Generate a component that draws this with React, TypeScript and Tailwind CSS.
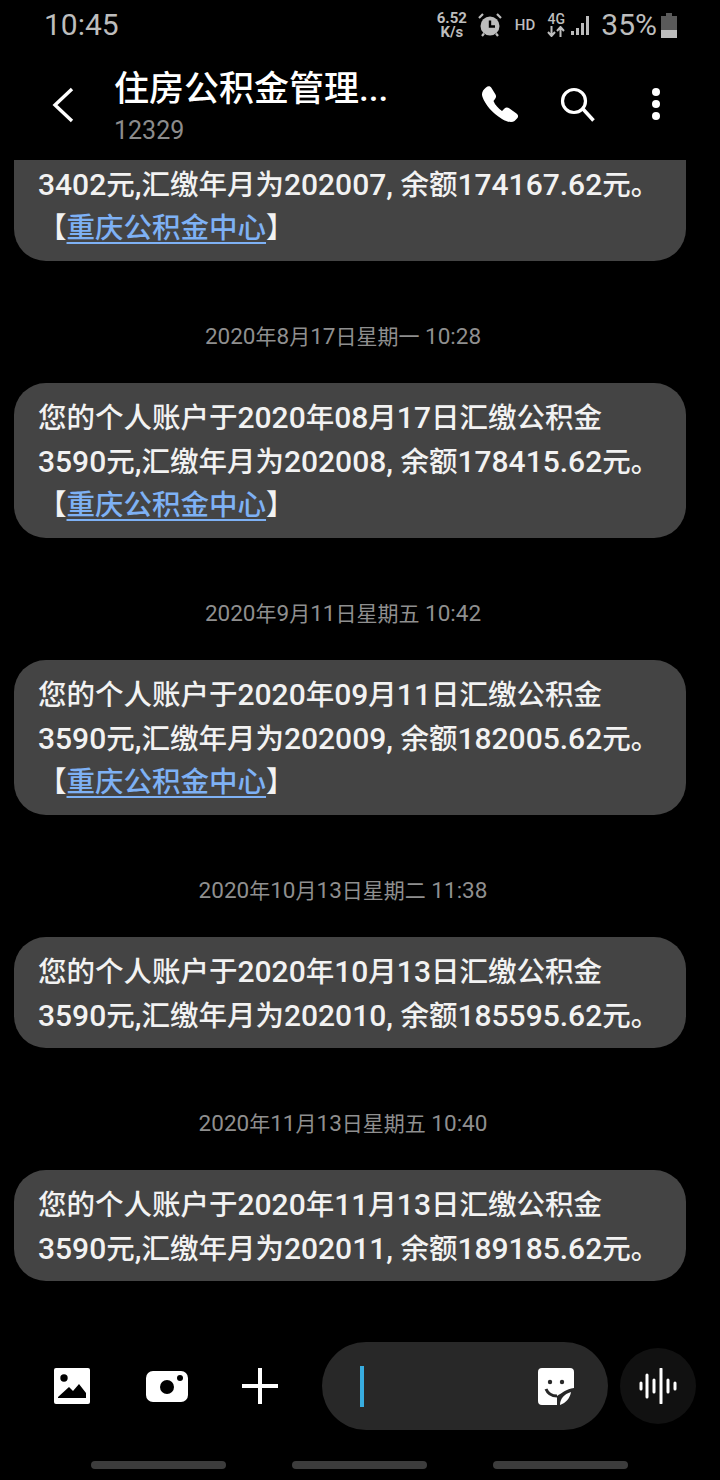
const FONT = "font-['Roboto','Noto_Sans_CJK_SC',sans-serif]";

interface Message {
  date: string;
  first?: string;
  second: string;
  link?: boolean;
}

const messages: Message[] = [
  { date: "", second: "3402元,汇缴年月为202007, 余额174167.62元。", link: true },
  { date: "2020年8月17日星期一 10:28", first: "您的个人账户于2020年08月17日汇缴公积金", second: "3590元,汇缴年月为202008, 余额178415.62元。", link: true },
  { date: "2020年9月11日星期五 10:42", first: "您的个人账户于2020年09月11日汇缴公积金", second: "3590元,汇缴年月为202009, 余额182005.62元。", link: true },
  { date: "2020年10月13日星期二 11:38", first: "您的个人账户于2020年10月13日汇缴公积金", second: "3590元,汇缴年月为202010, 余额185595.62元。" },
  { date: "2020年11月13日星期五 10:40", first: "您的个人账户于2020年11月13日汇缴公积金", second: "3590元,汇缴年月为202011, 余额189185.62元。" },
];

// latin runs are set a bit larger than the CJK around them, like the phone's font
function Mixed({ text, latin }: { text: string; latin: string }) {
  return (
    <>
      {text.split(/([\x00-\x7f]+)/).map((part, i) =>
        i % 2 ? (
          <span key={i} className={latin}>
            {part}
          </span>
        ) : (
          part
        )
      )}
    </>
  );
}

function StatusBar() {
  return (
    <div className="flex h-[50px] shrink-0 items-center pl-[44px] pr-[42px] text-[#bdbdbd]">
      <span className="text-[30px] leading-none">10:45</span>
      <div className="ml-auto flex items-center">
        <div className="w-[32px] text-center text-[15px] font-bold leading-[14px]">
          6.52
          <br />
          K/s
        </div>
        <svg className="ml-[9px]" width="26" height="26" viewBox="0 0 26 26">
          <circle cx="13" cy="14" r="9.5" fill="#bdbdbd" />
          <path d="M13 8.5v6h5" fill="none" stroke="#000" strokeWidth="2.4" />
          <path d="M2 6l4-4M24 6l-4-4M5 24l2-2.5M21 24l-2-2.5" stroke="#bdbdbd" strokeWidth="2.2" />
        </svg>
        <span className="ml-[12px] text-[15px] font-medium">HD</span>
        <div className="ml-[12px] flex w-[18px] flex-col items-center">
          <span className="text-[14px] font-medium leading-[13px]">4G</span>
          <svg width="18" height="11" viewBox="0 0 18 11">
            <path d="M4.5 0v9M1 6l3.5 4L8 6M13.5 11V2M10 5l3.5-4L17 5" fill="none" stroke="#bdbdbd" strokeWidth="2" />
          </svg>
        </div>
        <svg className="ml-[5px]" width="22" height="22" viewBox="0 0 22 22">
          <path d="M1 17h3v4H1zM6 14h3v7H6zM11 9h3v12h-3zM16 2h3v19h-3z" fill="#bdbdbd" />
        </svg>
        <span className="ml-[9px] text-[30px] leading-none">35%</span>
        <svg className="ml-[3px]" width="18" height="25" viewBox="0 0 18 25">
          <path d="M6 0h6v3h5v14H1V3h5z" fill="#5a5a5a" />
          <path d="M1 17h16v8H1z" fill="#bdbdbd" />
        </svg>
      </div>
    </div>
  );
}

function Header() {
  return (
    <div className="flex h-[110px] shrink-0 items-start">
      <svg className="ml-[50px] mt-[36px]" width="28" height="38" viewBox="0 0 28 38">
        <path d="M22 3L5 19l17 16" fill="none" stroke="#fff" strokeWidth="3.4" />
      </svg>
      <div className="ml-[36px] w-[340px]">
        <div className="mt-[18px] text-[35px] font-medium leading-[44px] text-white">住房公积金管理...</div>
        <div className="mt-[4px] text-[25px] leading-[30px] text-[#8c8c8c]">12329</div>
      </div>
      <svg className="ml-[28px] mt-[36px] overflow-visible" width="36" height="36" viewBox="0 0 36 36">
        <path
          d="M4 1.500C6-.5 8.500 0 9.500 2l4 6.500c1 2 .5 3.500-.5 4.500l-1.500 2c1.500 4 5 7.500 8.500 10l2.500-2.500c1.500-1.500 3.500-1 5 0l7 5c2 1.500 2 3.500.5 5L32.500 35c-2.500 2-7.500 1-12.500-2C10 27 3 18 .5 11-1 7 1 4 4 1.500z"
          fill="#fff"
        />
      </svg>
      <svg className="ml-[42px] mt-[36px]" width="38" height="38" viewBox="0 0 38 38">
        <circle cx="14" cy="15" r="11.500" fill="none" stroke="#fff" strokeWidth="3.200" />
        <path d="M23 23l10.500 11.500" stroke="#fff" strokeWidth="3.500" />
      </svg>
      <div className="ml-[54px] mt-[38px] flex flex-col gap-[4px]">
        <span className="h-[8px] w-[8px] rounded-full bg-white" />
        <span className="h-[8px] w-[8px] rounded-full bg-white" />
        <span className="h-[8px] w-[8px] rounded-full bg-white" />
      </div>
    </div>
  );
}

function Bubble({ first, second, link }: Message) {
  const latin = "text-[30px]";
  return (
    <div className="ml-[14px] rounded-[32px] bg-[#444444] pb-[10px] pl-[24px] pt-[13px] text-[28.5px] font-medium leading-[44px] whitespace-nowrap text-[#f2f2f2]">
      {/* the top bubble's first line is scrolled away under the header */}
      <div className="h-[44px]">{first && <Mixed text={first} latin={latin} />}</div>
      <div className="h-[44px]">
        <Mixed text={second} latin={latin} />
      </div>
      {link && (
        <div className="h-[44px]">
          【<span className="text-[#7eb1f5] underline underline-offset-[4px]">重庆公积金中心</span>】
        </div>
      )}
    </div>
  );
}

function Composer() {
  return (
    <div className="h-[150px] shrink-0">
      <div className="mt-[12px] flex h-[88px] items-center pl-[54px]">
        <svg width="36" height="36" viewBox="0 0 36 36">
          <rect width="36" height="36" rx="2" fill="#fff" />
          <circle cx="10" cy="10" r="3.700" fill="#000" />
          <path d="M4 30v-1l11-10 4 4 6-7 7 9v5z" fill="#000" />
        </svg>
        <svg className="ml-[56px]" width="42" height="31" viewBox="0 0 42 31">
          <rect width="42" height="31" rx="7" fill="#fff" />
          <circle cx="21" cy="16" r="7" fill="#000" />
          <circle cx="34" cy="7" r="3" fill="#000" />
        </svg>
        <svg className="ml-[54px]" width="36" height="36" viewBox="0 0 36 36">
          <path d="M18 0v36M0 18h36" stroke="#fff" strokeWidth="4" />
        </svg>
        <div className="ml-[44px] flex h-[88px] w-[286px] items-center rounded-[44px] bg-[#282828] pl-[38px]">
          <span className="h-[41px] w-[4px] bg-[#38ade0]" />
          <svg className="ml-[174px]" width="36" height="37" viewBox="0 0 36 37">
            <path d="M4 0h28a4 4 0 0 1 4 4v16c-8 1-12 5-17 8v9H4a4 4 0 0 1-4-4V4a4 4 0 0 1 4-4z" fill="#fff" />
            <circle cx="12" cy="14" r="2.200" fill="#282828" />
            <circle cx="24" cy="14" r="2.200" fill="#282828" />
            <path d="M8 21c2 5 6 7 11 7" fill="none" stroke="#282828" strokeWidth="3" />
            <path d="M22 37c0-6 4-11 11-13-1 6-5 11-11 13z" fill="#fff" />
          </svg>
        </div>
        <div className="ml-[12px] flex h-[76px] w-[76px] items-center justify-center rounded-full bg-[#111111]">
          <svg width="38" height="36" viewBox="0 0 38 36">
            <path
              d="M2 15v6M8 7v22M15 12v12M22 1v34M29 12v12M36 15v6"
              stroke="#fff"
              strokeWidth="3"
              strokeLinecap="round"
            />
          </svg>
        </div>
      </div>
      <div className="mt-[31px] flex gap-[66px] pl-[91px]">
        <span className="h-[8px] w-[135px] rounded-full bg-[#3c3c3c]" />
        <span className="h-[8px] w-[135px] rounded-full bg-[#3c3c3c]" />
        <span className="h-[8px] w-[135px] rounded-full bg-[#3c3c3c]" />
      </div>
    </div>
  );
}

export default function App() {
  return (
    <div className={`${FONT} flex h-[1480px] w-[720px] flex-col overflow-hidden bg-black`}>
      <StatusBar />
      <Header />
      <div className="flex min-h-0 flex-1 flex-col justify-end overflow-hidden pb-[49px] pr-[34px]">
        {messages.map((m, i) => (
          <div key={i} className="shrink-0">
            {m.date && (
              <div className="flex h-[122px] items-center justify-center whitespace-pre pt-[30px] text-[21px] text-[#8f8f8f]">
                <span>
                  <Mixed text={m.date} latin="text-[22.5px]" />
                </span>
              </div>
            )}
            <Bubble {...m} />
          </div>
        ))}
      </div>
      <Composer />
    </div>
  );
}
